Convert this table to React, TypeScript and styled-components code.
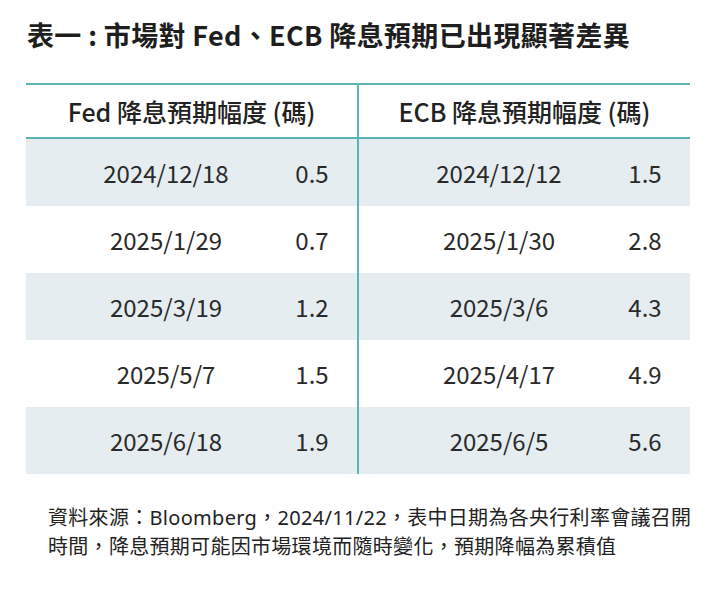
import React from 'react';
import styled, { createGlobalStyle } from 'styled-components';

const GlobalStyle = createGlobalStyle`
    html, body {
        margin: 0;
        padding: 0;
        background: #ffffff;
    }
    body {
        font-family: 'Noto Sans CJK TC', 'Noto Sans', sans-serif;
        color: #222222;
    }
`

const rows = [
    { fedDate: '2024/12/18', fed: '0.5', ecbDate: '2024/12/12', ecb: '1.5' },
    { fedDate: '2025/1/29', fed: '0.7', ecbDate: '2025/1/30', ecb: '2.8' },
    { fedDate: '2025/3/19', fed: '1.2', ecbDate: '2025/3/6', ecb: '4.3' },
    { fedDate: '2025/5/7', fed: '1.5', ecbDate: '2025/4/17', ecb: '4.9' },
    { fedDate: '2025/6/18', fed: '1.9', ecbDate: '2025/6/5', ecb: '5.6' },
];

const App = () => {
    return (
        <Page>
            <GlobalStyle />
            <Title>表一 : 市場對 Fed、ECB 降息預期已出現顯著差異</Title>
            <Table>
                <HeadRow>
                    <Half>
                        <HeadText>Fed 降息預期幅度 (碼)</HeadText>
                    </Half>
                    <Half $divider>
                        <HeadText>ECB 降息預期幅度 (碼)</HeadText>
                    </Half>
                </HeadRow>
                {rows.map((r, i) => (
                    <Row key={r.fedDate} $shaded={i % 2 === 0}>
                        <Half>
                            <DateCell>{r.fedDate}</DateCell>
                            <ValueCell>{r.fed}</ValueCell>
                        </Half>
                        <Half $divider>
                            <DateCell>{r.ecbDate}</DateCell>
                            <ValueCell>{r.ecb}</ValueCell>
                        </Half>
                    </Row>
                ))}
            </Table>
            <Note>
                資料來源：Bloomberg，2024/11/22，表中日期為各央行利率會議召開<br />
                時間，降息預期可能因市場環境而隨時變化，預期降幅為累積值
            </Note>
        </Page>
    )
}

export default App;

const Page = styled.div`
    width: 725px;
    height: 604px;
    padding: 18px 0 0 26px;
    box-sizing: border-box;
`

const Title = styled.h1`
    margin: 0 0 31px 1px;
    font-size: 27px;
    line-height: 34px;
    font-weight: 700;
    letter-spacing: 0.35px;
    color: #1e1e1e;
    white-space: nowrap;
`

const Table = styled.div`
    width: 664px;
    border-top: 2px solid #5cb4b5;
`

const HeadRow = styled.div`
    display: flex;
    height: 52px;
    border-bottom: 2px solid #5cb4b5;
`

const Row = styled.div<{ $shaded: boolean }>`
    display: flex;
    height: 67px;
    background: ${p => (p.$shaded ? '#e5edf0' : '#ffffff')};
`

const Half = styled.div<{ $divider?: boolean }>`
    flex: 1;
    display: flex;
    align-items: center;
    justify-content: flex-start;
    border-left: ${p => (p.$divider ? '2px solid #5cb4b5' : 'none')};
`

const HeadText = styled.div`
    width: 100%;
    text-align: center;
    font-size: 25px;
    font-weight: 500;
    color: #222222;
    white-space: nowrap;
`

const DateCell = styled.div`
    width: 232px;
    margin-left: 24px;
    text-align: center;
    font-size: 24px;
    color: #2a2a2a;
`

const ValueCell = styled.div`
    width: 60px;
    text-align: center;
    font-size: 24px;
    color: #2a2a2a;
`

const Note = styled.p`
    margin: 29px 0 0 22px;
    font-family: 'Noto Sans', 'Noto Sans CJK TC', sans-serif;
    font-size: 20px;
    line-height: 29px;
    letter-spacing: 0.3px;
    color: #222222;
    white-space: nowrap;
`
